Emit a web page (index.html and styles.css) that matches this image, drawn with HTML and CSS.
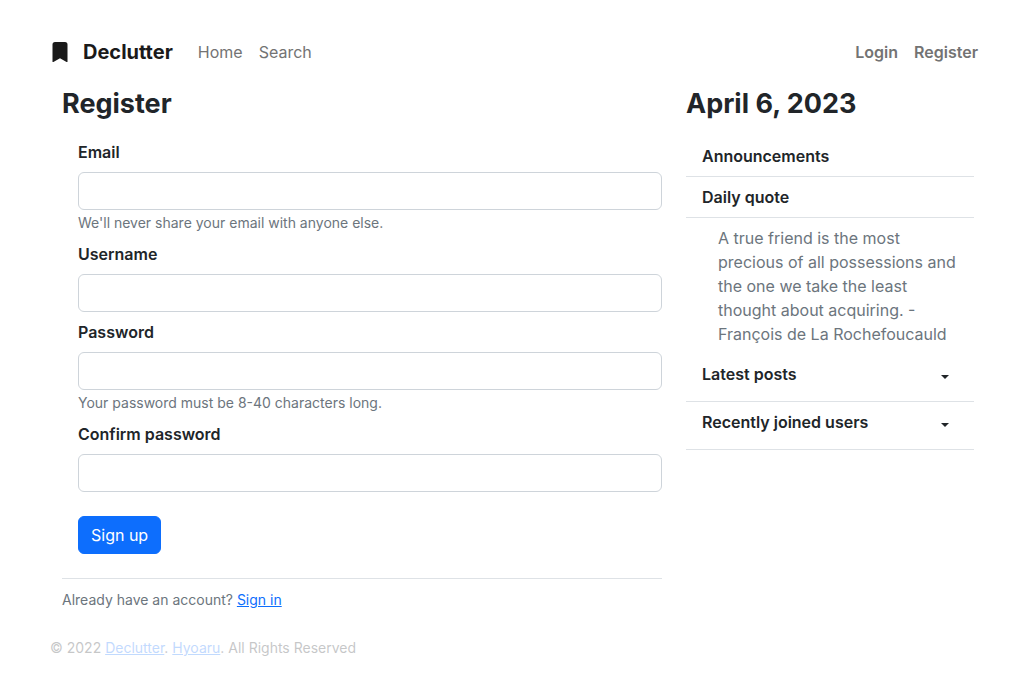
FILE: index.html
```html
<!DOCTYPE html>
<html lang="en">
<head>
<meta charset="utf-8">
<meta name="viewport" content="width=device-width, initial-scale=1">
<title>Register - Declutter</title>
<link rel="stylesheet" href="styles.css">
</head>
<body>
<div class="page">
  <nav class="navbar">
    <a class="brand" href="#">
      <svg class="brand-icon" width="20" height="20" viewBox="0 0 16 16" fill="currentColor" aria-hidden="true"><path d="M2 2v13.500a.5.5 0 0 0 .74.439L8 13.069l5.260 2.870A.5.5 0 0 0 14 15.500V2a2 2 0 0 0-2-2H4a2 2 0 0 0-2 2z"/></svg>
      <span>Declutter</span>
    </a>
    <a class="nav-link" href="#">Home</a>
    <a class="nav-link" href="#">Search</a>
    <div class="nav-account">
      <a class="nav-link strong" href="#">Login</a>
      <a class="nav-link strong" href="#">Register</a>
    </div>
  </nav>
  <div class="columns">
    <main class="main">
      <h1 class="title">Register</h1>
      <form class="form">
        <div class="field">
          <label class="label" for="email">Email</label>
          <input class="input" id="email" type="email">
          <div class="hint">We'll never share your email with anyone else.</div>
        </div>
        <div class="field">
          <label class="label" for="username">Username</label>
          <input class="input" id="username" type="text">
        </div>
        <div class="field">
          <label class="label" for="password">Password</label>
          <input class="input" id="password" type="password">
          <div class="hint">Your password must be 8-40 characters long.</div>
        </div>
        <div class="field">
          <label class="label" for="confirm">Confirm password</label>
          <input class="input" id="confirm" type="password">
        </div>
        <button class="submit" type="submit">Sign up</button>
      </form>
      <div class="signin">Already have an account? <a class="link" href="#">Sign in</a></div>
    </main>
    <aside class="sidebar">
      <h2 class="title">April 6, 2023</h2>
      <div class="side-item">Announcements</div>
      <div class="side-item">Daily quote</div>
      <p class="quote">A true friend is the most precious of all possessions and the one we take the least thought about acquiring. - François de La Rochefoucauld</p>
      <button class="side-toggle" type="button">Latest posts<span class="caret"></span></button>
      <button class="side-toggle" type="button">Recently joined users<span class="caret"></span></button>
    </aside>
  </div>
  <footer class="footer">© 2022 <a class="link" href="#">Declutter</a>. <a class="link" href="#">Hyoaru</a>. All Rights Reserved</footer>
</div>
</body>
</html>
```
FILE: styles.css
```css
* { box-sizing: border-box; }
body {
  margin: 0;
  background: #fff;
  color: #212529;
  font-family: Inter, "Liberation Sans", sans-serif;
  font-size: 16px;
  line-height: 24px;
}
.page { padding: 24px 50px; }
.navbar {
  display: flex;
  align-items: center;
  gap: 16px;
  height: 56px;
  padding-right: 8px;
}
.brand {
  display: flex;
  align-items: center;
  gap: 13px;
  margin-right: 9px;
  color: #1a1a1a;
  font-size: 20px;
  line-height: 30px;
  font-weight: 700;
  text-decoration: none;
}
.nav-link { color: #737373; text-decoration: none; }
.strong { font-weight: 600; }
.nav-account { display: flex; gap: 16px; margin-left: auto; }
.columns {
  display: grid;
  grid-template-columns: 2fr 1fr;
}
.main, .sidebar { padding: 0 12px; }
.title {
  margin: 8px 0 20px;
  font-size: 27px;
  line-height: 32px;
  font-weight: 700;
}
.sidebar .title { margin-bottom: 16px; }
.form {
  padding: 0 0 24px 16px;
  border-bottom: 1px solid #dee2e6;
}
.field { margin-bottom: 8px; }
.label {
  display: block;
  margin-bottom: 8px;
  font-weight: 600;
}
.input {
  display: block;
  width: 100%;
  height: 38px;
  padding: 6px 12px;
  border: 1px solid #ced4da;
  border-radius: 6px;
  background: #fff;
  color: inherit;
  font: inherit;
}
.hint, .signin {
  color: #6c757d;
  font-size: 14px;
  line-height: 18px;
}
.hint { padding: 4px 0 2px; }
.submit {
  margin-top: 16px;
  padding: 6px 12px;
  border: 1px solid #0d6efd;
  border-radius: 6px;
  background: #0d6efd;
  color: #fff;
  font: inherit;
}
.signin { padding-top: 12px; }
.link { color: #0d6efd; }
.side-item, .side-toggle {
  width: 100%;
  padding: 8px 16px;
  border: 0;
  border-bottom: 1px solid #dee2e6;
  font-weight: 600;
}
.quote {
  margin: 8px 0 0;
  padding: 0 16px 0 32px;
  color: #6c757d;
}
.side-toggle {
  display: flex;
  justify-content: space-between;
  align-items: center;
  padding: 8px 25px 15px 16px;
  background: none;
  color: inherit;
  font-family: inherit;
  font-size: 16px;
  line-height: 24px;
}
.quote + .side-toggle { margin-top: 8px; }
.caret {
  margin-top: 6px;
  border-top: 4px solid;
  border-right: 4px solid transparent;
  border-left: 4px solid transparent;
}
.footer {
  margin-top: 30px;
  font-size: 14px;
  line-height: 18px;
  opacity: .25;
}
```
